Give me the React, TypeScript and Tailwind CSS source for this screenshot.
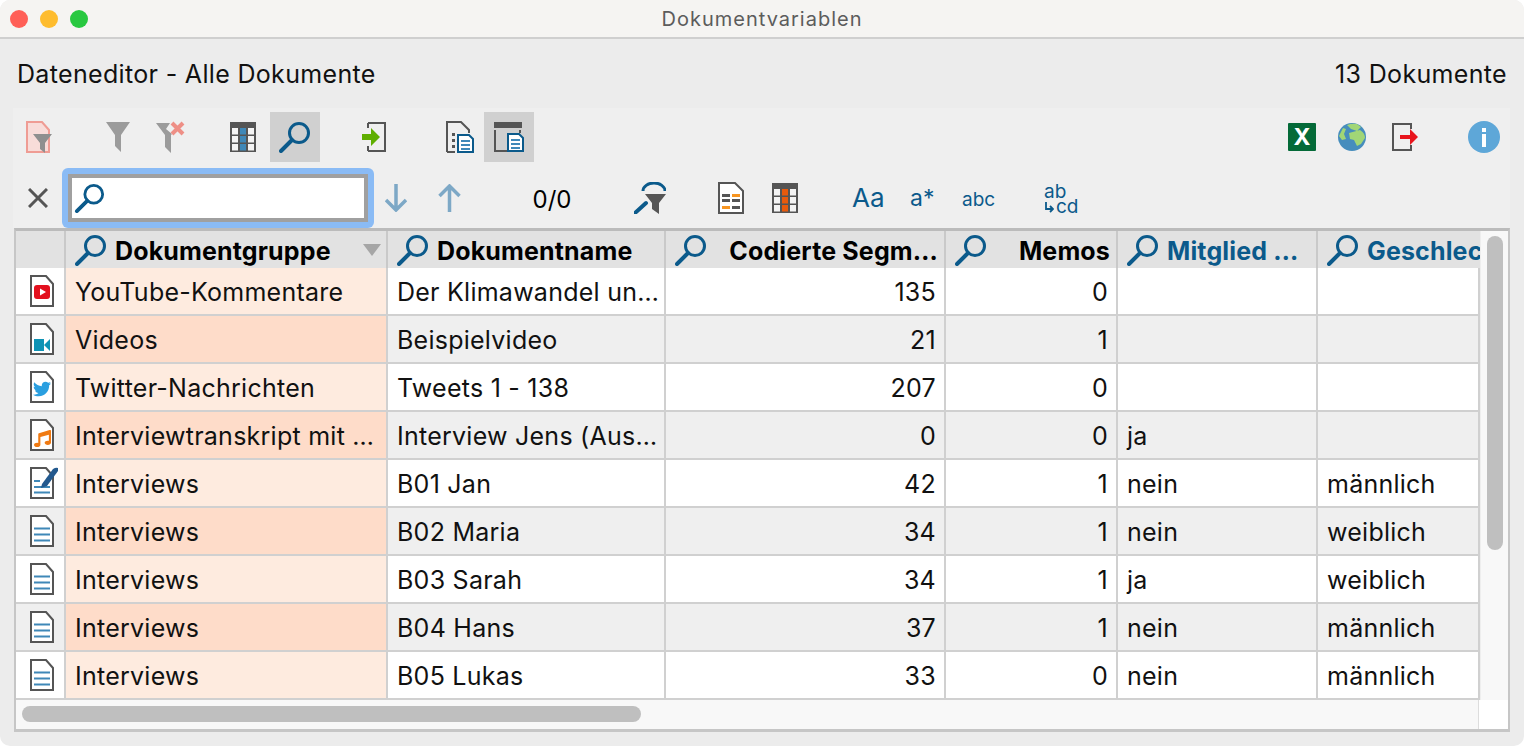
/**
 * Dokumentvariablen window
 * Data editor with toolbar, search bar and document table.
 */

import type { ReactNode } from 'react';
import { FaTwitter, FaMusic } from 'react-icons/fa';

const BLUE = '#0b5a8b';
const GRAY = '#555555';

function SearchIcon({ className = 'w-8 h-8', color = BLUE }: { className?: string; color?: string }) {
  return (
    <svg viewBox="0 0 32 32" className={className} fill="none">
      <circle cx="20" cy="12" r="9.5" stroke={color} strokeWidth="3" />
      <path d="M13 19 L2 30" stroke={color} strokeWidth="4" strokeLinecap="round" />
    </svg>
  );
}

function Funnel({ fill = '#9b9b9b' }: { fill?: string }) {
  return <path d="M0 0 H24 L15 13 V30 L9 24 V13 Z" fill={fill} />;
}

function Grid({ band, dark = GRAY }: { band: string; dark?: string }) {
  const cells = [0, 1, 2];
  return (
    <svg viewBox="0 0 26 30" className="w-[26px] h-[30px]">
      <rect width="26" height="30" fill={dark} />
      {[6, 14, 22].map((y) =>
        cells.map((c) => (
          <rect key={`${y}-${c}`} x={2 + c * 8} y={y} width="6" height="6.5" fill={c === 1 ? band : '#f4f4f4'} />
        ))
      )}
    </svg>
  );
}

function DocShell({ children }: { children?: ReactNode }) {
  return (
    <svg viewBox="0 0 24 32" className="w-6 h-8 shrink-0" fill="none">
      <path d="M1 1 H16 L23 9 V31 H1 Z" fill="#ffffff" stroke={GRAY} strokeWidth="2" />
      {children}
    </svg>
  );
}

function TextLines() {
  return <path d="M4 13.5 H20 M4 19.5 H20 M4 25.5 H20" stroke="#3f88b8" strokeWidth="2" />;
}

function RowIcon({ kind }: { kind: string }) {
  if (kind === 'youtube') {
    return (
      <DocShell>
        <rect x="4" y="10" width="16" height="14" rx="3" fill="#e3101e" />
        <path d="M10 13.5 L16 17 L10 20.5 Z" fill="#ffffff" />
      </DocShell>
    );
  }
  if (kind === 'video') {
    return (
      <DocShell>
        <rect x="4" y="16" width="10" height="12" fill="#0f93b5" />
        <path d="M14 22 L20 16 V28 Z" fill="#0f93b5" />
      </DocShell>
    );
  }
  if (kind === 'twitter') {
    return (
      <div className="relative w-6 h-8">
        <DocShell />
        <FaTwitter className="absolute left-[3px] top-[9px] w-[18px] h-[18px] text-[#2a9fe0]" />
      </div>
    );
  }
  if (kind === 'music') {
    return (
      <div className="relative w-6 h-8">
        <DocShell />
        <FaMusic className="absolute left-[4px] top-[11px] w-[17px] h-[17px] text-[#f07a12]" />
      </div>
    );
  }
  if (kind === 'edit') {
    return (
      <svg viewBox="0 0 28 32" className="w-7 h-8 shrink-0" fill="none">
        <path d="M1 1 H16 L23 9 V31 H1 Z" fill="#ffffff" stroke={GRAY} strokeWidth="2" />
        <path d="M4 14 H10 M4 20 H20 M4 25.5 H20" stroke="#3f88b8" strokeWidth="2" />
        <path d="M12 17 L23 2 Q26 0 28 1 L28 4 L17 19 L11 21 Z" fill="#23598e" />
      </svg>
    );
  }
  return (
    <DocShell>
      <TextLines />
    </DocShell>
  );
}

type Row = { icon: string; group: string; name: string; segs: string; memos: string; member: string; gender: string };

const rows: Row[] = [
  { icon: 'youtube', group: 'YouTube-Kommentare', name: 'Der Klimawandel un…', segs: '135', memos: '0', member: '', gender: '' },
  { icon: 'video', group: 'Videos', name: 'Beispielvideo', segs: '21', memos: '1', member: '', gender: '' },
  { icon: 'twitter', group: 'Twitter-Nachrichten', name: 'Tweets 1 - 138', segs: '207', memos: '0', member: '', gender: '' },
  { icon: 'music', group: 'Interviewtranskript mit …', name: 'Interview Jens (Aus…', segs: '0', memos: '0', member: 'ja', gender: '' },
  { icon: 'edit', group: 'Interviews', name: 'B01 Jan', segs: '42', memos: '1', member: 'nein', gender: 'männlich' },
  { icon: 'doc', group: 'Interviews', name: 'B02 Maria', segs: '34', memos: '1', member: 'nein', gender: 'weiblich' },
  { icon: 'doc', group: 'Interviews', name: 'B03 Sarah', segs: '34', memos: '1', member: 'ja', gender: 'weiblich' },
  { icon: 'doc', group: 'Interviews', name: 'B04 Hans', segs: '37', memos: '1', member: 'nein', gender: 'männlich' },
  { icon: 'doc', group: 'Interviews', name: 'B05 Lukas', segs: '33', memos: '0', member: 'nein', gender: 'männlich' },
];

const gridCols = 'grid grid-cols-[50px_322px_278px_280px_172px_200px_162px]';

function HeaderCell({ label, right, blue, children }: { label: string; right?: boolean; blue?: boolean; children?: ReactNode }) {
  return (
    <div className="relative flex items-center h-full pl-[9px] pr-[6px] border-r-2 border-[#c9c9c9] overflow-hidden">
      <SearchIcon className="w-8 h-8 shrink-0" />
      <span
        className={`ml-2 pt-1 font-bold tracking-[0.15px] whitespace-nowrap ${right ? 'flex-1 text-right' : ''} ${blue ? 'text-[#0b5a8b]' : 'text-black'}`}
      >
        {label}
      </span>
      {children}
    </div>
  );
}

function Cell({ children, right, className = '' }: { children?: ReactNode; right?: boolean; className?: string }) {
  return (
    <div
      className={`flex items-center h-full pt-1 pl-[9px] pr-2 border-r-2 border-[#d0d0d0] whitespace-nowrap overflow-hidden tracking-[0.25px] ${right ? 'justify-end' : ''} ${className}`}
    >
      {children}
    </div>
  );
}

function Toolbar() {
  return (
    <div className="bg-[#efefef] ml-[13px] w-[1497px] h-[120px] pt-1">
      <div className="flex items-center h-[50px]">
        <svg viewBox="0 0 26 32" className="ml-[13px] w-[26px] h-8" fill="none">
          <path d="M1 1 H16 L23 9 V31 H1 Z" fill="#f8dcd9" stroke="#ef9c94" strokeWidth="2" />
          <path d="M7 13 H26 L19 22 V32 L14 28 V22 Z" fill="#8f8f8f" />
        </svg>
        <svg viewBox="0 0 24 30" className="ml-[54px] w-6 h-[30px]">
          <Funnel />
        </svg>
        <svg viewBox="0 0 30 32" className="ml-[26px] w-[30px] h-8">
          <path d="M0 2 H14 L10 8 L16 13 L15 14 V32 L9 26 V14 Z" fill="#9b9b9b" />
          <path d="M16 2 L27 13 M27 2 L16 13" stroke="#ee8f86" strokeWidth="4" />
        </svg>
        <div className="ml-[44px]">
          <Grid band="#3f88b8" />
        </div>
        <div className="ml-[14px] w-[50px] h-[50px] bg-[#d0d0d0] flex items-center justify-center">
          <SearchIcon />
        </div>
        <svg viewBox="0 0 24 30" className="ml-[42px] w-6 h-[30px]" fill="none">
          <path d="M6 1 H23 V29 H6 M6 1 V6 M6 24 V29" stroke={GRAY} strokeWidth="2" />
          <path d="M0 12 H9 V6 L18 15 L9 24 V18 H0 Z" fill="#5fae00" />
        </svg>
        <svg viewBox="0 0 28 32" className="ml-[60px] w-7 h-8" fill="none">
          <path d="M1 31 V1 H15 L23 9 V12 M1 31 H9" stroke={GRAY} strokeWidth="2" />
          <path d="M6 12 H9 V15 H6 Z M6 18 H9 V21 H6 Z M6 24 H9 V27 H6 Z" fill={GRAY} />
          <path d="M12 14 H23 L27 18 V31 H12 Z" fill="#ffffff" stroke={BLUE} strokeWidth="2" />
          <path d="M15 20 H24 M15 24 H24 M15 28 H24" stroke="#3f88b8" strokeWidth="2" />
        </svg>
        <div className="ml-[10px] w-[50px] h-[50px] bg-[#d0d0d0] flex items-center justify-center">
          <svg viewBox="0 0 30 30" className="w-[30px] h-[30px]" fill="none">
            <path d="M1 8 V29 H13" stroke={GRAY} strokeWidth="2" />
            <rect width="28" height="6" fill={GRAY} />
            <path d="M26 8 V11" stroke={GRAY} strokeWidth="2" />
            <path d="M14 12 H25 L29 16 V29 H14 Z" fill="#ffffff" stroke={BLUE} strokeWidth="2" />
            <path d="M17 18 H26 M17 22 H26 M17 26 H26" stroke="#3f88b8" strokeWidth="2" />
          </svg>
        </div>
        <div className="ml-auto w-7 h-7 bg-[#046a38] rounded-[1px] flex items-center justify-center text-white font-bold text-[23px] leading-none">
          X
        </div>
        <svg viewBox="0 0 28 28" className="ml-[22px] w-7 h-7">
          <circle cx="14" cy="14" r="14" fill="#468dbd" />
          <path d="M9 2 Q14 0 19 1 L23 4 L19 8 L13 6 Z M11 10 L22 7 Q27 10 27 15 L23 21 L19 23 L16 17 L12 16 Z M1 13 L5 5 L8 6 L6 11 L8 16 L4 17 Z" fill="#a1d676" />
        </svg>
        <svg viewBox="0 0 26 28" className="ml-[26px] w-[26px] h-7" fill="none">
          <path d="M19 6 V1 H1 V27 H19 V22" stroke={GRAY} strokeWidth="2" />
          <path d="M8 12 H18 V6 L26 14 L18 22 V16 H8 Z" fill="#e8141c" />
        </svg>
        <div className="ml-[50px] mr-[10px] w-8 h-8 rounded-full bg-[#5ea7d8] flex flex-col items-center justify-center gap-[2px]">
          <div className="w-1 h-1 bg-white" />
          <div className="w-1 h-[13px] bg-white" />
        </div>
      </div>

      <div className="flex items-center h-[60px] mt-[6px]">
        <svg viewBox="0 0 20 20" className="ml-[15px] w-5 h-5" fill="none">
          <path d="M1 1 L19 19 M19 1 L1 19" stroke={GRAY} strokeWidth="3" />
        </svg>
        <div className="ml-[14px] w-[312px] h-[60px] p-[6px] rounded-[6px] bg-[#8abbf5]">
          <div className="flex items-center h-full bg-white border-4 border-[#a0a0a0] pl-[2px]">
            <SearchIcon className="w-8 h-[30px] shrink-0" />
            <input className="flex-1 min-w-0 h-full outline-none bg-transparent" />
          </div>
        </div>
        <svg viewBox="0 0 22 28" className="ml-[11px] w-[22px] h-7" fill="none">
          <path d="M11 0 V26 M1 16 L11 26 L21 16" stroke="#7da8c6" strokeWidth="3.5" />
        </svg>
        <svg viewBox="0 0 23 28" className="ml-[31px] w-[23px] h-7" fill="none">
          <path d="M11.5 28 V2 M1.5 12 L11.5 2 L21.5 12" stroke="#7da8c6" strokeWidth="3.5" />
        </svg>
        <span className="ml-[71px] w-10 pt-[3px] text-center text-[24px] text-black whitespace-nowrap">0/0</span>
        <svg viewBox="0 0 32 32" className="ml-[62px] w-8 h-8" fill="none">
          <path d="M9 9 A 11 8 0 0 1 31 9" stroke={BLUE} strokeWidth="3" />
          <path d="M11 12 H32 L25 21 V32 L18 27 V21 Z" fill={GRAY} />
          <path d="M12 21 L1 31" stroke={BLUE} strokeWidth="4" strokeLinecap="round" />
        </svg>
        <svg viewBox="0 0 26 32" className="ml-[52px] w-[26px] h-8" fill="none">
          <path d="M1 1 H17 L25 9 V31 H1 Z" fill="#ffffff" stroke={GRAY} strokeWidth="2" />
          <path d="M4 12 H12 V15 H4 Z M4 17 H12 V20 H4 Z M14 17 H22 V20 H14 Z M14 24 H22 V27 H14 Z" fill={GRAY} />
          <path d="M14 12 H22 V15 H14 Z M4 24 H12 V27 H4 Z" fill="#f79520" />
        </svg>
        <div className="ml-[28px]">
          <Grid band="#e95a0c" />
        </div>
        <span className="ml-[54px] w-[33px] text-[26px] leading-none text-[#0b5a8b] whitespace-nowrap">Aa</span>
        <span className="ml-[25px] w-[26px] text-[23px] leading-none text-[#0b5a8b] whitespace-nowrap">a*</span>
        <span className="ml-[26px] w-8 pt-[3px] text-[19px] leading-none text-[#0b5a8b] whitespace-nowrap">abc</span>
        <div className="ml-[50px] w-[33px] h-8 pt-[2px] text-[#0b5a8b] text-[19px] leading-[15px] whitespace-nowrap">
          ab
          <br />
          <svg viewBox="0 0 10 11" className="inline-block align-baseline w-[10px] h-[11px] mr-[2px]" fill="none">
            <path d="M2 0 V7 H9 M6 4 L9 7 L6 10" stroke={BLUE} strokeWidth="1.8" />
          </svg>
          cd
        </div>
      </div>
    </div>
  );
}

function DataTable() {
  return (
    <div className="ml-[14px] w-[1496px] h-[504px] border-x-2 border-b-[3px] border-[#c6c6c6] border-t-[3px] border-t-[#bbbbbb] flex flex-col bg-white">
      <div className="flex h-[469px]">
        <div className="w-[1464px] overflow-hidden">
          <div className={`${gridCols} h-[37px] bg-[#e2e2e2]`}>
            <div className="h-full border-r-2 border-[#c9c9c9]" />
            <HeaderCell label="Dokumentgruppe">
              <div className="absolute right-[5px] top-[13px] w-0 h-0 border-x-[9px] border-x-transparent border-t-[12px] border-t-[#a6a6a6]" />
            </HeaderCell>
            <HeaderCell label="Dokumentname" />
            <HeaderCell label="Codierte Segm…" right />
            <HeaderCell label="Memos" right />
            <HeaderCell label="Mitglied …" blue />
            <div className="flex items-center h-full pl-[9px] overflow-hidden">
              <SearchIcon className="w-8 h-8 shrink-0" />
              <span className="ml-2 pt-1 font-bold tracking-[0.15px] whitespace-nowrap text-[#0b5a8b]">Geschlecht</span>
            </div>
          </div>
          {rows.map((r, i) => {
            const alt = i % 2 === 1;
            return (
              <div key={i} className={`${gridCols} h-12 border-b-2 border-[#d0d0d0] ${alt ? 'bg-[#efefef]' : 'bg-white'}`}>
                <Cell className="!pl-[14px] !pr-0 !pt-0">
                  <RowIcon kind={r.icon} />
                </Cell>
                <Cell className={alt ? 'bg-[#fedcc9]' : 'bg-[#feebdf]'}>{r.group}</Cell>
                <Cell>{r.name}</Cell>
                <Cell right>{r.segs}</Cell>
                <Cell right>{r.memos}</Cell>
                <Cell>{r.member}</Cell>
                <Cell className="border-r-0">{r.gender}</Cell>
              </div>
            );
          })}
        </div>
        <div className="flex-1 bg-[#f8f8f8] border-l border-[#eeeeee] pt-[5px] pl-[6px]">
          <div className="w-4 h-[314px] rounded-full bg-[#bfbfbf]" />
        </div>
      </div>
      <div className="flex flex-1">
        <div className="w-[1462px] bg-[#f8f8f8] pl-[6px] pt-[6px]">
          <div className="w-[619px] h-4 rounded-full bg-[#bfbfbf]" />
        </div>
        <div className="flex-1 bg-white border-l border-[#dddddd]" />
      </div>
    </div>
  );
}

export default function App() {
  return (
    <div className="w-[1524px] h-[746px] bg-white overflow-hidden font-['Inter','Liberation_Sans',sans-serif] text-[25px] text-[#111111]">
      <div className="h-full rounded-[10px] bg-[#ececec] overflow-hidden">
        <div className="relative flex items-center justify-center h-[39px] bg-[#f5f4f2] border-b-2 border-[#cfcfcf]">
          <div className="absolute left-[10px] top-[10px] flex gap-3">
            <div className="w-[18px] h-[18px] rounded-full bg-[#ff5f57]" />
            <div className="w-[18px] h-[18px] rounded-full bg-[#febc2e]" />
            <div className="w-[18px] h-[18px] rounded-full bg-[#28c840]" />
          </div>
          <span className="text-[20px] tracking-[1px] text-[#5c5c5c]">Dokumentvariablen</span>
        </div>
        <div className="flex items-center justify-between h-[69px] pl-[17px] pr-[17px] pt-[3px] tracking-[0.33px] text-[#111111]">
          <span>Dateneditor - Alle Dokumente</span>
          <span>13 Dokumente</span>
        </div>
        <Toolbar />
        <DataTable />
      </div>
    </div>
  );
}
